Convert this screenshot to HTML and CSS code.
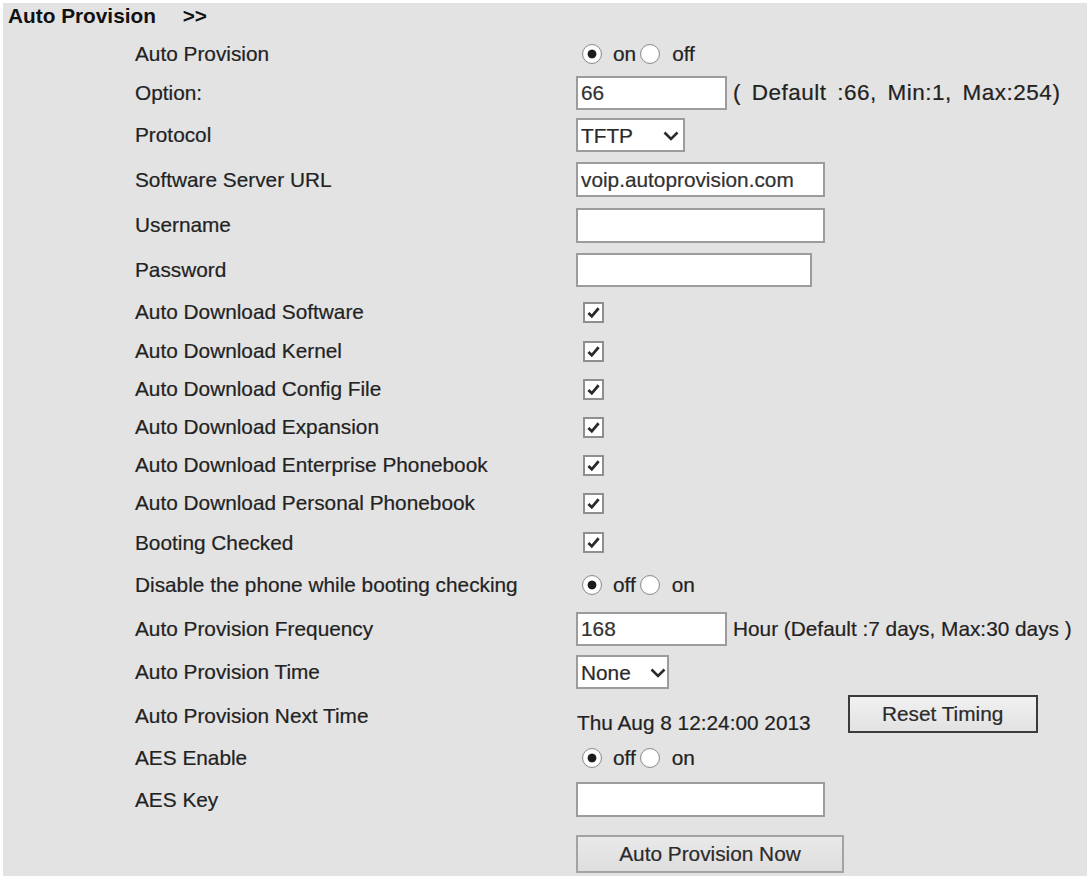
FILE: index.html
```html
<!DOCTYPE html>
<html lang="en">
<head>
<meta charset="UTF-8">
<title>Auto Provision</title>
<link rel="stylesheet" href="styles.css">
</head>
<body>
<div class="panel">
<div class="title">Auto Provision <span class="arrows">&gt;&gt;</span></div>
<form class="form">
  <div class="label">Auto Provision</div>
  <div class="ctrl">
    <label class="opt"><input type="radio" name="ap" checked><span>on</span></label>
    <label class="opt"><input type="radio" name="ap"><span>off</span></label>
  </div>

  <div class="label">Option:</div>
  <div class="ctrl">
    <input class="text short" type="text" value="66">
    <span class="hint first">( Default :66, Min:1, Max:254)</span>
  </div>

  <div class="label">Protocol</div>
  <div class="ctrl">
    <span class="select proto">
      <select><option>TFTP</option><option>FTP</option><option>HTTP</option></select>
      <svg viewBox="0 0 16 10" width="16" height="10"><path d="M1.5 1.5 L8 8 L14.5 1.5" fill="none" stroke="#2b2b2b" stroke-width="2.6"/></svg>
    </span>
  </div>

  <div class="label">Software Server URL</div>
  <div class="ctrl"><input class="text long" type="text" value="voip.autoprovision.com"></div>

  <div class="label">Username</div>
  <div class="ctrl"><input class="text long" type="text"></div>

  <div class="label">Password</div>
  <div class="ctrl"><input class="text pass" type="password"></div>

  <div class="label">Auto Download Software</div>
  <div class="ctrl"><span class="box"><svg viewBox="0 0 20 20" width="17" height="17"><path d="M4 10.5 L8 14.5 L16 5" fill="none" stroke="#2a2a2a" stroke-width="3.2"/></svg></span></div>

  <div class="label">Auto Download Kernel</div>
  <div class="ctrl"><span class="box"><svg viewBox="0 0 20 20" width="17" height="17"><path d="M4 10.5 L8 14.5 L16 5" fill="none" stroke="#2a2a2a" stroke-width="3.2"/></svg></span></div>

  <div class="label">Auto Download Config File</div>
  <div class="ctrl"><span class="box"><svg viewBox="0 0 20 20" width="17" height="17"><path d="M4 10.5 L8 14.5 L16 5" fill="none" stroke="#2a2a2a" stroke-width="3.2"/></svg></span></div>

  <div class="label">Auto Download Expansion</div>
  <div class="ctrl"><span class="box"><svg viewBox="0 0 20 20" width="17" height="17"><path d="M4 10.5 L8 14.5 L16 5" fill="none" stroke="#2a2a2a" stroke-width="3.2"/></svg></span></div>

  <div class="label">Auto Download Enterprise Phonebook</div>
  <div class="ctrl"><span class="box"><svg viewBox="0 0 20 20" width="17" height="17"><path d="M4 10.5 L8 14.5 L16 5" fill="none" stroke="#2a2a2a" stroke-width="3.2"/></svg></span></div>

  <div class="label">Auto Download Personal Phonebook</div>
  <div class="ctrl"><span class="box"><svg viewBox="0 0 20 20" width="17" height="17"><path d="M4 10.5 L8 14.5 L16 5" fill="none" stroke="#2a2a2a" stroke-width="3.2"/></svg></span></div>

  <div class="label">Booting Checked</div>
  <div class="ctrl"><span class="box"><svg viewBox="0 0 20 20" width="17" height="17"><path d="M4 10.5 L8 14.5 L16 5" fill="none" stroke="#2a2a2a" stroke-width="3.2"/></svg></span></div>

  <div class="label">Disable the phone while booting checking</div>
  <div class="ctrl">
    <label class="opt"><input type="radio" name="dis" checked><span>off</span></label>
    <label class="opt"><input type="radio" name="dis"><span>on</span></label>
  </div>

  <div class="label">Auto Provision Frequency</div>
  <div class="ctrl">
    <input class="text short" type="text" value="168">
    <span class="hint">Hour (Default :7 days, Max:30 days )</span>
  </div>

  <div class="label">Auto Provision Time</div>
  <div class="ctrl">
    <span class="select time">
      <select><option>None</option></select>
      <svg viewBox="0 0 16 10" width="16" height="10"><path d="M1.5 1.5 L8 8 L14.5 1.5" fill="none" stroke="#2b2b2b" stroke-width="2.6"/></svg>
    </span>
  </div>

  <div class="label">Auto Provision Next Time</div>
  <div class="ctrl next">
    <span class="date">Thu Aug 8 12:24:00 2013</span>
    <button type="button" class="btn reset">Reset Timing</button>
  </div>

  <div class="label">AES Enable</div>
  <div class="ctrl">
    <label class="opt"><input type="radio" name="aes" checked><span>off</span></label>
    <label class="opt"><input type="radio" name="aes"><span>on</span></label>
  </div>

  <div class="label">AES Key</div>
  <div class="ctrl"><input class="text long" type="text"></div>

  <div class="label"></div>
  <div class="ctrl last"><button type="button" class="btn now">Auto Provision Now</button></div>
</form>
</div>
</body>
</html>
```

FILE: styles.css
```css
body {
  margin: 0;
  background: #ffffff;
  font-family: "Liberation Sans", Arial, sans-serif;
  font-size: 20.8px;
  color: #222;
  -webkit-text-stroke: 0.2px #222;
}
.panel {
  margin: 3px 0 0 3px;
  height: 873px;
  background: #e3e3e3;
  box-sizing: border-box;
  padding-left: 5px;
}
.title {
  height: 32px;
  line-height: 26px;
  font-weight: bold;
  color: #111;
  -webkit-text-stroke: 0;
}
.title .arrows { margin-left: 21px; }

.form {
  display: grid;
  margin-left: 127px;
  grid-template-columns: 441px 1fr;
  grid-template-rows: 38px 40px 44px 45px 46px 44px 40px 38px 38px 38px 38px 38px 41px 44px 43px 44px 43px 41px 43px 55px;
  align-items: center;
}
.label { white-space: nowrap; }
.ctrl {
  display: flex;
  align-items: center;
}

/* radios */
.opt {
  display: flex;
  align-items: center;
}
.opt input {
  appearance: none;
  margin: 0 11px 0 6px;
  width: 20px;
  height: 20px;
  border: 1px solid #8d8d8d;
  border-radius: 50%;
  background: radial-gradient(circle, #ffffff 55%, #e6e6e6 100%);
}
.opt input:checked {
  background: radial-gradient(circle, #1c1c1c 0 4px, #ffffff 4.8px 58%, #e2e2e2 100%);
}
.opt + .opt input { margin-left: 4px; margin-right: 12px; }

/* text fields */
.text {
  box-sizing: border-box;
  height: 34px;
  margin: 0;
  padding: 0 3px;
  border: 2px solid #9c9c9c;
  background: #fff;
  font: inherit;
  color: #333;
  outline: none;
}
.text.short { width: 151px; }
.text.long { width: 249px; height: 35px; }
.text.pass { width: 236px; }
.hint { margin-left: 6px; color: #222; }
.hint.first { font-size: 22.5px; letter-spacing: 0.5px; word-spacing: 4px; }

/* selects */
.select {
  position: relative;
  display: inline-block;
}
.select select {
  appearance: none;
  box-sizing: border-box;
  height: 34px;
  margin: 0;
  padding: 0 0 0 3px;
  border: 2px solid #9c9c9c;
  border-radius: 0;
  background: #fff;
  font: inherit;
  color: #2a2a2a;
}
.select.proto select { width: 109px; }
.select.time select { width: 93px; }
.select svg {
  position: absolute;
  right: 6px;
  top: 13px;
  pointer-events: none;
}
.select.time svg { right: 3px; }

/* checkboxes */
.box {
  box-sizing: border-box;
  width: 21px;
  height: 21px;
  margin-left: 7px;
  border: 2px solid #8f8f8f;
  background: #fff;
  display: flex;
  align-items: center;
  justify-content: center;
}

/* buttons */
.btn {
  box-sizing: border-box;
  height: 38px;
  font: inherit;
  color: #2c2c2c;
  background: linear-gradient(#f1f1f1, #e2e2e2);
  cursor: pointer;
}
.next { align-items: flex-end; }
.date { margin: 0 37px 1px 1px; }
.reset {
  width: 190px;
  border: 2px solid #3b3b3b;
  margin-bottom: 3px;
}
.last { align-self: end; padding-bottom: 3px; }
.now {
  width: 268px;
  border: 2px solid #a3a3a3;
  background: linear-gradient(#e9e9e9, #dedede);
}
```
